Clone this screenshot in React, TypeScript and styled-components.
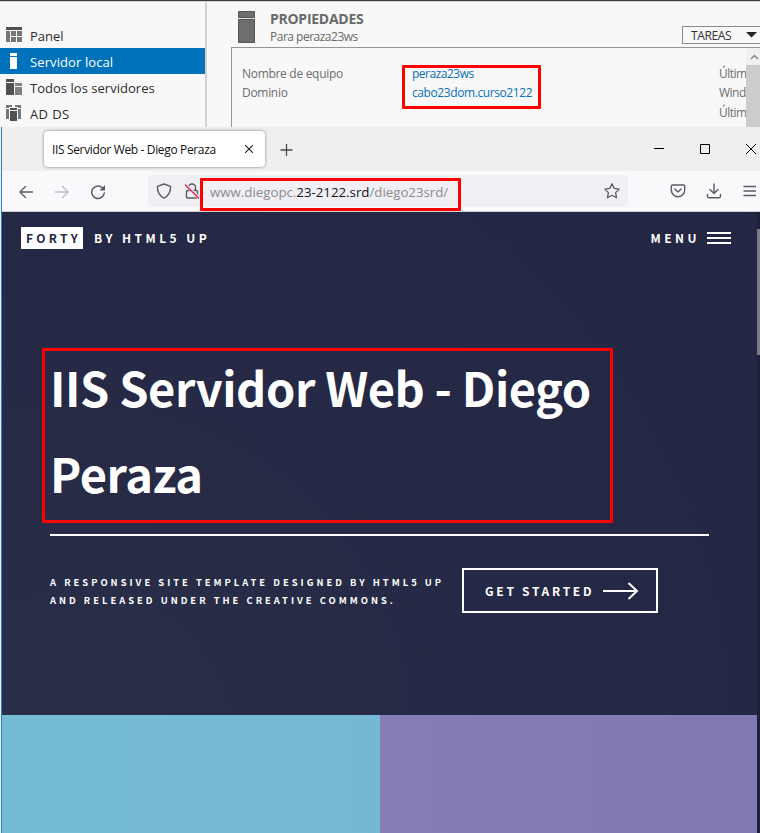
import React from 'react';
import styled, { createGlobalStyle } from 'styled-components';

const GlobalStyle = createGlobalStyle`
  *, *::before, *::after { box-sizing: border-box; }
  body { margin: 0; background: #f0f0f0; overflow: hidden; }
  h1, h2, p { margin: 0; font-weight: inherit; font-size: inherit; }
  svg { display: block; flex: none; }
`;

const ui = `"Open Sans", "Noto Sans", sans-serif`;
const site = `"Noto Sans CJK SC", "Noto Sans", sans-serif`;

const Screen = styled.div`
  position: relative;
  display: flex;
  flex-direction: column;
  width: 760px;
  height: 833px;
  overflow: hidden;
  font-family: ${ui};
  white-space: nowrap;
`;

/* Server manager */
const Manager = styled.section`
  display: flex;
  flex: none;
  height: 127px;
  border-top: 1px solid #3c3a3c;
  background: #f8f8f8;
  box-shadow: inset 0 1px 0 #d6d6d6;
  overflow: hidden;
`;

const Sidebar = styled.nav`
  width: 207px;
  flex: none;
  margin-top: 1px;
  padding-top: 20px;
  border-right: 2px solid #d2d2d2;
`;

const NavItem = styled.div<{ $active?: boolean; $spacing: number }>`
  display: flex;
  align-items: center;
  height: 26px;
  padding-left: 5px;
  gap: 7px;
  font-size: 13px;
  line-height: 24px;
  letter-spacing: ${(p) => p.$spacing}px;
  color: ${(p) => (p.$active ? '#fff' : '#2c2c2c')};
  background: ${(p) => (p.$active ? '#0072bc' : 'transparent')};
`;

const NavLabel = styled.span`
  padding-top: 2px;
`;

const Details = styled.div`
  display: flex;
  flex-direction: column;
  width: 529px;
  flex: none;
  margin-left: 24px;
`;

const DetailsHeader = styled.header`
  display: flex;
  height: 46px;
  padding: 10px 0 0 7px;
`;

const Titles = styled.div`
  flex: 1;
  margin: -2px 0 0 15px;
  color: #6a6a6a;
`;

const Title = styled.h2`
  font-size: 14px;
  font-weight: 700;
  line-height: 20px;
  letter-spacing: -0.27px;
`;

const Subtitle = styled.p`
  font-size: 12px;
  line-height: 16px;
  letter-spacing: -0.5px;
`;

const Tasks = styled.div`
  display: flex;
  align-items: center;
  justify-content: space-between;
  width: 78px;
  height: 18px;
  margin-top: 15px;
  padding: 0 3px 0 8px;
  border: 1px solid #8a8a8a;
  border-right: 0;
  color: #333;
  font-size: 12px;
  letter-spacing: -0.35px;
`;

const PropertyPanel = styled.div`
  display: flex;
  flex: 1;
  border: solid #969696;
  border-width: 1px 0 0 1px;
`;

const Properties = styled.dl`
  display: grid;
  grid-template-columns: 170px 307px 27px;
  grid-template-rows: 19px 20px 20px;
  flex: none;
  margin: 16px 0 0;
  padding-left: 10px;
  color: #6d6d6d;
  font-size: 12px;
  line-height: 19px;
  width: 514px;
`;

const Term = styled.dt<{ $spacing?: number }>`
  letter-spacing: ${(p) => p.$spacing ?? -0.3}px;
`;

const Value = styled.dd<{ $spacing: number }>`
  margin: 0;
  color: #0a70bb;
  letter-spacing: ${(p) => p.$spacing}px;
`;

const PanelScroll = styled.div`
  width: 14px;
  height: 100%;
  background: #ccc;
`;

const ScrollUp = styled.div`
  display: flex;
  justify-content: center;
  padding: 6px 0 0 3px;
  height: 17px;
  background: #f0f0f0;
`;

/* Browser window */
const Browser = styled.section`
  display: flex;
  flex-direction: column;
  flex: 1;
  margin-left: 1px;
  border-left: 1px solid #2c7fc0;
`;

const TabStrip = styled.div`
  display: flex;
  align-items: center;
  height: 44px;
  flex: none;
  padding-left: 42px;
  background: #efefef;
`;

const Tab = styled.div`
  display: flex;
  align-items: center;
  justify-content: space-between;
  width: 221px;
  height: 36px;
  padding: 0 12px 0 8px;
  border-radius: 4px;
  background: #fff;
  box-shadow: 0 0 3px rgba(60, 60, 75, 0.65);
  color: #111;
  font-size: 12px;
  letter-spacing: -0.35px;
`;

const NewTab = styled.div`
  margin-left: 15px;
`;

const WindowControls = styled.div`
  display: flex;
  align-items: center;
  gap: 36px;
  margin-left: auto;
  width: 106px;
  flex: none;
`;

const Toolbar = styled.div`
  display: flex;
  align-items: center;
  height: 41px;
  flex: none;
  padding-left: 16px;
  background: #f9f9fb;
  border-bottom: 1px solid #cfcfd4;
`;

const NavButtons = styled.div`
  display: flex;
  gap: 20px;
  width: 130px;
  padding-top: 1px;
`;

const AddressBar = styled.div`
  display: flex;
  align-items: center;
  width: 480px;
  height: 32px;
  padding: 0 8px;
  border-radius: 4px;
  background: #f0f0f4;
`;

const SecurityIcons = styled.div`
  display: flex;
  gap: 12px;
`;

const Url = styled.span`
  flex: 1;
  margin-left: 10px;
  padding-top: 2px;
  color: #8b8b92;
  font-size: 13.3px;
  letter-spacing: -0.02px;
  b { font-weight: 400; color: #15141a; }
`;

const ToolbarActions = styled.div`
  display: flex;
  gap: 20px;
  margin-left: 42px;
`;

/* Website */
const Viewport = styled.div`
  display: flex;
  flex: 1;
`;

const Site = styled.main`
  display: flex;
  flex-direction: column;
  width: 755px;
  color: #fff;
  font-family: ${site};
`;

const Hero = styled.section`
  height: 503px;
  flex: none;
  background: radial-gradient(circle at 10% 105%, #2a2e48 0, #252945 50%, #232744 100%);
`;

const SiteHeader = styled.header`
  display: flex;
  align-items: center;
  height: 52px;
  padding: 0 26px 0 19px;
  font-size: 12px;
  font-weight: 600;
  line-height: 22px;
`;

const Logo = styled.span`
  width: 62px;
  height: 22px;
  padding-left: 5px;
  color: #242943;
  background: #fff;
  letter-spacing: 3.35px;
`;

const Byline = styled.span`
  margin-left: 11px;
  letter-spacing: 3.45px;
`;

const Menu = styled.span`
  display: flex;
  align-items: center;
  gap: 7px;
  margin-left: auto;
  letter-spacing: 3.5px;
`;

const Banner = styled.div`
  padding: 80px 48px 0;
`;

const Heading = styled.h1`
  height: 192px;
  border-bottom: 2px solid #fff;
  font-size: 47px;
  font-weight: 600;
  line-height: 86px;
  letter-spacing: -0.45px;
`;

const BannerRow = styled.div`
  display: flex;
  align-items: flex-start;
  padding-top: 32px;
`;

const Blurb = styled.p`
  width: 412px;
  padding-top: 5px;
  font-size: 9.4px;
  font-weight: 700;
  line-height: 18px;
  letter-spacing: 3px;
`;

const StartButton = styled.div`
  display: flex;
  align-items: center;
  justify-content: space-between;
  width: 196px;
  height: 45px;
  padding: 0 17px 0 21px;
  border: 2px solid #fff;
  font-size: 12px;
  font-weight: 600;
  letter-spacing: 2.7px;
`;

const Tiles = styled.section`
  display: grid;
  grid-template-columns: 378px 377px;
  flex: 1;
`;

const Tile = styled.div<{ $from: string; $to: string }>`
  background: linear-gradient(90deg, ${(p) => p.$from}, ${(p) => p.$to});
`;

const PageScroll = styled.div`
  width: 3px;
  padding-top: 17px;
  background: #1e2138;
`;

const PageThumb = styled.div`
  height: 126px;
  background: #7b7c86;
`;

const Marker = styled.div<{ $x: number; $y: number; $w: number; $h: number }>`
  position: absolute;
  left: ${(p) => p.$x}px;
  top: ${(p) => p.$y}px;
  width: ${(p) => p.$w}px;
  height: ${(p) => p.$h}px;
  border: 3px solid #f00;
  border-radius: 1px;
`;

const PanelIcon = () => (
  <svg width="18" height="18" fill="#777">
    <path fill="#505050" d="M1 1h16v3H1z" />
    <path d="M1 5h4v11H1zM6 5h5v5H6zM12 5h5v5h-5zM6 11h5v5H6zM12 11h5v5h-5z" />
  </svg>
);
const LocalIcon = () => (
  <svg width="18" height="18" fill="#fff"><path d="M5 1h7v3H5zM5 5h7v12H5z" /></svg>
);
const AllIcon = () => (
  <svg width="18" height="18">
    <path fill="#505050" d="M1 1h8v3H1zM1 5h8v12H1z" />
    <path fill="#808080" d="M10 5h7v3h-7zM10 9h7v8h-7z" />
  </svg>
);
const DomainIcon = () => (
  <svg width="18" height="18">
    <path fill="#777" d="M1 1h6v2H4v1H1zM10 1h6v3h-3V3h-3zM1 5h3v10H1zM13 5h3v10h-3z" />
    <path fill="#505050" d="M5 4h7v2H5zM5 7h7v10H5z" />
  </svg>
);
const ServerIcon = () => (
  <svg width="17" height="32">
    <path fill="#6e6e6e" stroke="#555" d="M.5.5h16v6H.5zM.5 8.500h16v23H.5z" />
    <path fill="#e0e0e0" d="M0 7h17v1H0z" />
  </svg>
);

const line = { fill: 'none', stroke: '#5b5b66', strokeWidth: 1.4, strokeLinecap: 'round', strokeLinejoin: 'round' } as const;

const BackIcon = () => (
  <svg width="16" height="16" {...line}><path d="M14.500 8H2M7.500 2.500L2 8l5.500 5.500" /></svg>
);
const ForwardIcon = () => (
  <svg width="16" height="16" {...line} stroke="#bcbcc2"><path d="M1.500 8H14M8.500 2.500L14 8l-5.500 5.500" /></svg>
);
const ReloadIcon = () => (
  <svg width="16" height="16" {...line} strokeWidth="1.500">
    <path d="M13.300 4.800A6.300 6.300 0 1 0 14.300 9" />
    <path fill="#5b5b66" stroke="none" d="M15 1v5.500H9.500z" />
  </svg>
);
const ShieldIcon = () => (
  <svg width="16" height="16" {...line}>
    <path d="M8 1l6 2.200c.4.200.6.500.6.900C14.600 9 12.500 13 8 15.200 3.500 13 1.400 9 1.400 4.100c0-.4.200-.7.600-.9z" />
  </svg>
);
const LockIcon = () => (
  <svg width="16" height="16" {...line}>
    <path d="M4.500 7V4.500a3.500 3.500 0 0 1 7 0V7M3.500 7.500h9a1 1 0 0 1 1 1V14a1 1 0 0 1-1 1h-9a1 1 0 0 1-1-1V8.500a1 1 0 0 1 1-1z" />
    <path stroke="#f0f0f4" strokeWidth="3" d="M2 2l13 13" />
    <path stroke="#e22850" d="M1.500 2l13 13" />
  </svg>
);
const StarIcon = () => (
  <svg width="16" height="16" {...line} strokeWidth="1.300">
    <path d="M8 .8l2.200 4.600 5 .7-3.600 3.500.9 5.100L8 12.300l-4.500 2.400.9-5.100L.8 6.100l5-.7z" />
  </svg>
);
const PocketIcon = () => (
  <svg width="16" height="16" {...line}>
    <path d="M2.500 2h11a1.200 1.200 0 0 1 1.200 1.200V7A6.700 6.700 0 0 1 1.300 7V3.200A1.200 1.200 0 0 1 2.500 2zM4.800 6l3.200 3 3.200-3" />
  </svg>
);
const DownloadIcon = () => (
  <svg width="16" height="16" {...line}>
    <path d="M8 1v9.500M4 6.500l4 4 4-4M1.500 11.500v1.800c0 .8.600 1.400 1.400 1.400h10.200c.8 0 1.400-.6 1.400-1.400v-1.800" />
  </svg>
);
const HamburgerIcon = () => (
  <svg width="14" height="16" {...line}><path d="M2 3.500h12M2 8h12M2 12.500h12" /></svg>
);

export default function App() {
  return (
    <>
      <GlobalStyle />
      <Screen>
        <Manager>
          <Sidebar>
            <NavItem $spacing={0}><PanelIcon /><NavLabel>Panel</NavLabel></NavItem>
            <NavItem $active $spacing={0.1}><LocalIcon /><NavLabel>Servidor local</NavLabel></NavItem>
            <NavItem $spacing={0.03}><AllIcon /><NavLabel>Todos los servidores</NavLabel></NavItem>
            <NavItem $spacing={0.4}><DomainIcon /><NavLabel>AD DS</NavLabel></NavItem>
          </Sidebar>
          <Details>
            <DetailsHeader>
              <ServerIcon />
              <Titles>
                <Title>PROPIEDADES</Title>
                <Subtitle>Para peraza23ws</Subtitle>
              </Titles>
              <Tasks>
                TAREAS
                <svg width="11" height="6"><path fill="#222" d="M0 0h11L5.500 5.500z" /></svg>
              </Tasks>
            </DetailsHeader>
            <PropertyPanel>
              <Properties>
                <Term>Nombre de equipo</Term>
                <Value $spacing={-0.5}>peraza23ws</Value>
                <Term $spacing={-0.5}>Últim</Term>
                <Term>Dominio</Term>
                <Value $spacing={-0.41}>cabo23dom.curso2122</Value>
                <Term $spacing={-0.5}>Wind</Term>
                <Term />
                <Value $spacing={0} />
                <Term $spacing={-0.5}>Últim</Term>
              </Properties>
              <PanelScroll>
                <ScrollUp>
                  <svg width="9" height="6" fill="none" stroke="#888" strokeWidth="1.500"><path d="M1 5l3.500-3.500L8 5" /></svg>
                </ScrollUp>
              </PanelScroll>
            </PropertyPanel>
          </Details>
        </Manager>

        <Browser>
          <TabStrip>
            <Tab>
              IIS Servidor Web - Diego Peraza
              <svg width="8" height="8" stroke="#222" strokeWidth="1.100"><path d="M0 0l8 8M8 0L0 8" /></svg>
            </Tab>
            <NewTab>
              <svg width="13" height="13" stroke="#4b4b55" strokeWidth="1.300"><path d="M6.500 1v12M.5 7h12" /></svg>
            </NewTab>
            <WindowControls>
              <svg width="10" height="10" fill="#000"><path d="M0 4h10v1H0z" /></svg>
              <svg width="10" height="10" fill="none" stroke="#000"><path d="M.5.5h9v9h-9z" /></svg>
              <svg width="10" height="10" stroke="#000"><path d="M0 0l10 10M10 0L0 10" /></svg>
            </WindowControls>
          </TabStrip>
          <Toolbar>
            <NavButtons><BackIcon /><ForwardIcon /><ReloadIcon /></NavButtons>
            <AddressBar>
              <SecurityIcons><ShieldIcon /><LockIcon /></SecurityIcons>
              <Url>www.diegopc.<b>23-2122.srd</b>/diego23srd/</Url>
              <StarIcon />
            </AddressBar>
            <ToolbarActions><PocketIcon /><DownloadIcon /><HamburgerIcon /></ToolbarActions>
          </Toolbar>
          <Viewport>
            <Site>
              <Hero>
                <SiteHeader>
                  <Logo>FORTY</Logo>
                  <Byline>BY HTML5 UP</Byline>
                  <Menu>
                    MENU
                    <svg width="24" height="12" fill="#fff"><path d="M0 0h24v2H0zM0 5h24v2H0zM0 10h24v2H0z" /></svg>
                  </Menu>
                </SiteHeader>
                <Banner>
                  <Heading>IIS Servidor Web - Diego<br />Peraza</Heading>
                  <BannerRow>
                    <Blurb>A RESPONSIVE SITE TEMPLATE DESIGNED BY HTML5 UP<br />AND RELEASED UNDER THE CREATIVE COMMONS.</Blurb>
                    <StartButton>
                      GET STARTED
                      <svg width="36" height="18" fill="none" stroke="#fff" strokeWidth="2"><path d="M0 9h34M25.500 1l8.500 8-8.500 8" /></svg>
                    </StartButton>
                  </BannerRow>
                </Banner>
              </Hero>
              <Tiles>
                <Tile $from="#74bcd5" $to="#76b8d3" />
                <Tile $from="#857cb8" $to="#8177b3" />
              </Tiles>
            </Site>
            <PageScroll><PageThumb /></PageScroll>
          </Viewport>
        </Browser>

        <Marker $x={402} $y={65} $w={139} $h={44} />
        <Marker $x={200} $y={178} $w={261} $h={33} />
        <Marker $x={42} $y={348} $w={571} $h={175} />
      </Screen>
    </>
  );
}
